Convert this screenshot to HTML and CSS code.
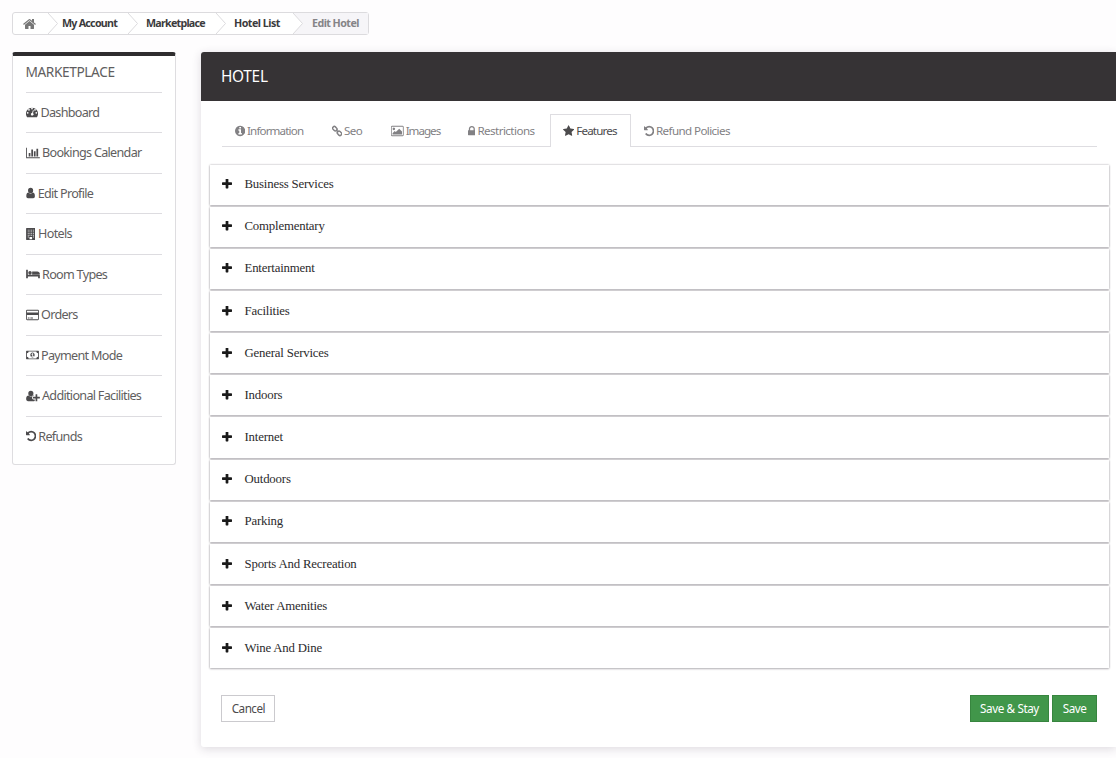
FILE: index.html
```html
<!DOCTYPE html>
<html lang="en">
<head>
    <meta charset="UTF-8">
    <title>Edit Hotel</title>
    <link rel="stylesheet" href="styles.css">
</head>
<body>
    <!-- icons -->
    <svg class="sprite" xmlns="http://www.w3.org/2000/svg">
        <symbol id="i-home" viewBox="64 0 1664 1792"><path d="M1472 992v480q0 26-19 45t-45 19h-384v-384h-256v384h-384q-26 0-45-19t-19-45v-480q0-1 .5-3t.5-3l575-474 575 474q1 2 1 6zm223-69l-62 74q-8 9-21 11h-3q-13 0-21-7l-692-577-692 577q-12 8-24 7-13-2-21-11l-62-74q-8-10-7-23.5t11-21.5l719-599q32-26 76-26t76 26l244 204v-195q0-14 9-23t23-9h192q14 0 23 9t9 23v408l219 182q10 8 11 21.5t-7 23.5z"/></symbol>
        <symbol id="i-dash" viewBox="0 0 1792 1792"><path fill-rule="evenodd" d="M896 256A896 896 0 0 0 140 1633q19 31 56 31h1400q37 0 56-31A896 896 0 0 0 896 256zM384 1024a128 128 0 1 1-256 0 128 128 0 0 1 256 0zm192-448a128 128 0 1 1-256 0 128 128 0 0 1 256 0zm448-192a128 128 0 1 1-256 0 128 128 0 0 1 256 0zm448 192a128 128 0 1 1-256 0 128 128 0 0 1 256 0zm192 448a128 128 0 1 1-256 0 128 128 0 0 1 256 0zM1140 691l-101 382a192 192 0 1 1-124-33l101-382q18-50 65-47 60 20 59 80z"/></symbol>
        <symbol id="i-chart" viewBox="0 0 2048 1792"><path d="M640 896v512h-256v-512h256zm384-512v1024h-256v-1024h256zm1024 1152v128h-2048v-1536h128v1408h1920zm-640-896v768h-256v-768h256zm384-384v1152h-256v-1152h256z"/></symbol>
        <symbol id="i-user" viewBox="0 0 1280 1792"><path d="M1280 1399q0 120-70 193t-186 72H256q-116 1-186-72T0 1399q0-180 40-340 55-220 258-242 150 145 342 145t342-145q203 22 258 242 40 160 40 340zM1024 512a384 384 0 1 1-768 0 384 384 0 0 1 768 0z"/></symbol>
        <symbol id="i-building" viewBox="0 0 1408 1792"><path fill-rule="evenodd" d="M64 0h1280q64 0 64 64v1664q0 64-64 64H64q-64 0-64-64V64Q0 0 64 0zM256 256v128h128V256zm256 0v128h128V256zm256 0v128h128V256zm256 0v128h128V256zM256 512v128h128V512zm256 0v128h128V512zm256 0v128h128V512zm256 0v128h128V512zM256 768v128h128V768zm256 0v128h128V768zm256 0v128h128V768zm256 0v128h128V768zM256 1024v128h128v-128zm256 0v128h128v-128zm256 0v128h128v-128zm256 0v128h128v-128zM256 1280v128h128v-128zm768 0v128h128v-128zM512 1344v320h384v-320z"/></symbol>
        <symbol id="i-bed" viewBox="0 0 2048 1792"><path d="M256 1024h1728q26 0 45 19t19 45v448h-256v-256h-1536v256h-256v-1216q0-26 19-45t45-19h128q26 0 45 19t19 45v704zm576-320q0-106-75-181t-181-75-181 75-75 181 75 181 181 75 181-75 75-181zm1216 256v-64q0-159-112.5-271.5t-271.5-112.5h-704q-26 0-45 19t-19 45v384h1152z"/></symbol>
        <symbol id="i-card" viewBox="0 0 1920 1792"><path fill-rule="evenodd" d="M160 128h1600q160 0 160 160v1216q0 160-160 160H160q-160 0-160-160V288q0-160 160-160zm0 128q-32 0-32 32v224h1664V288q0-32-32-32zM128 896v608q0 32 32 32h1600q32 0 32-32V896zM256 1280h256v128H256zm384 0h384v128H640z"/></symbol>
        <symbol id="i-money" viewBox="0 0 1920 1792"><path fill-rule="evenodd" d="M64 256h1792q64 0 64 64v1152q0 64-64 64H64q-64 0-64-64V320q0-64 64-64zm320 128q0 256-256 256v512q256 0 256 256h1152q0-256 256-256V640q-256 0-256-256zm576 128c180 0 320 170 320 384s-140 384-320 384-320-170-320-384 140-384 320-384zm-15 128L785 786l77 80 66-60v250H798v96h384v-96h-128V640z"/></symbol>
        <symbol id="i-userplus" viewBox="0 0 2048 1792"><path d="M1088 512a384 384 0 1 1-768 0 384 384 0 0 1 768 0zM1664 1024h352q32 0 32 32v192q0 32-32 32h-352v352q0 32-32 32h-192q-32 0-32-32v-352h-352q-32 0-32-32v-192q0-32 32-32h352V672q0-32 32-32h192q32 0 32 32zM896 1248q0 160 160 160h224v238q-50 18-112 18H267Q0 1650 0 1399q0-180 40-340 55-220 298-242 170 145 366 145t366-145l70 8v71h-84q-160 0-160 160z"/></symbol>
        <symbol id="i-undo" viewBox="128 0 1536 1792"><path d="M1664 896q0 156-61 298t-164 245-245 164-298 61q-172 0-327-72.5t-264-204.5q-7-10-6.5-22.5t8.5-20.5l137-138q10-9 25-9 16 2 23 12 73 95 179 147t225 52q104 0 198.5-40.5t163.5-109.5 109.5-163.5 40.5-198.5-40.5-198.5-109.5-163.5-163.5-109.5-198.5-40.5q-98 0-188 35.5t-160 101.5l137 138q31 30 14 69-17 40-59 40h-448q-26 0-45-19t-19-45v-448q0-42 40-59 39-17 69 14l130 129q107-101 244.5-156.5t284.5-55.5q156 0 298 61t245 164 164 245 61 298z"/></symbol>
        <symbol id="i-info" viewBox="128 0 1536 1792"><path d="M1152 1376v-160q0-14-9-23t-23-9h-96v-512q0-14-9-23t-23-9h-320q-14 0-23 9t-9 23v160q0 14 9 23t23 9h96v320h-96q-14 0-23 9t-9 23v160q0 14 9 23t23 9h448q14 0 23-9t9-23zm-128-896v-160q0-14-9-23t-23-9h-192q-14 0-23 9t-9 23v160q0 14 9 23t23 9h192q14 0 23-9t9-23zm640 416q0 209-103 385.5t-279.5 279.5-385.5 103-385.5-103-279.5-279.5-103-385.5 103-385.5 279.5-279.5 385.5-103 385.5 103 279.5 279.5 103 385.5z"/></symbol>
        <symbol id="i-link" viewBox="0 0 1664 1792"><g fill="none" stroke="currentColor" stroke-width="230" transform="rotate(45 832 896)"><rect x="-80" y="625" width="770" height="542" rx="240"/><rect x="974" y="625" width="770" height="542" rx="240"/><path d="M560 896h544"/></g></symbol>
        <symbol id="i-image" viewBox="0 0 1920 1792"><path transform="translate(32 0)" d="M576 576q0 80-56 136t-136 56-136-56-56-136 56-136 136-56 136 56 56 136zm1024 384v448h-1408v-192l320-320 160 160 512-512zm96-704h-1600q-13 0-22.5 9.5t-9.5 22.5v1216q0 13 9.5 22.5t22.5 9.5h1600q13 0 22.5-9.5t9.5-22.5v-1216q0-13-9.5-22.5t-22.5-9.5zm160 32v1216q0 66-47 113t-113 47h-1600q-66 0-113-47t-47-113v-1216q0-66 47-113t113-47h1600q66 0 113 47t47 113z"/></symbol>
        <symbol id="i-lock" viewBox="320 0 1152 1792"><path d="M640 768h512v-192q0-106-75-181t-181-75-181 75-75 181v192zm832 96v576q0 40-28 68t-68 28h-960q-40 0-68-28t-28-68v-576q0-40 28-68t68-28h32v-192q0-184 132-316t316-132 316 132 132 316v192h32q40 0 68 28t28 68z"/></symbol>
        <symbol id="i-star" viewBox="64 0 1664 1792"><path d="M1728 647q0 22-26 48l-363 354 86 500q1 7 1 20 0 21-10.5 35.5t-30.5 14.5q-19 0-40-12l-449-236-449 236q-22 12-40 12-21 0-31.5-14.5t-10.5-35.5q0-6 2-20l86-500-364-354q-25-27-25-48 0-37 56-46l502-73 225-455q19-41 49-41t49 41l225 455 502 73q56 9 56 46z"/></symbol>
        <symbol id="i-plus" viewBox="192 192 1408 1408"><path d="M1600 736v192q0 40-28 68t-68 28h-416v416q0 40-28 68t-68 28h-192q-40 0-68-28t-28-68v-416h-416q-40 0-68-28t-28-68v-192q0-40 28-68t68-28h416v-416q0-40 28-68t68-28h192q40 0 68 28t28 68v416h416q40 0 68 28t28 68z"/></symbol>
        <symbol id="i-arrow" viewBox="0 0 10 21"><path d="M0 0l9.500 10.500L0 21" fill="#fff" stroke="#dcdbde"/></symbol>
    </svg>

    <div class="breadcrumb">
        <a href="#" class="bc-home"><svg class="ico"><use href="#i-home"/></svg></a>
        <svg class="arrow"><use href="#i-arrow"/></svg>
        <a href="#" class="bc-account">My Account</a>
        <svg class="arrow"><use href="#i-arrow"/></svg>
        <a href="#" class="bc-market">Marketplace</a>
        <svg class="arrow"><use href="#i-arrow"/></svg>
        <a href="#" class="bc-list">Hotel List</a>
        <span class="bc-current"><svg class="arrow"><use href="#i-arrow"/></svg>Edit Hotel</span>
    </div>

    <div class="container">
        <div class="sidebar">
            <h2>MARKETPLACE</h2>
            <ul>
                <li><a href="#"><svg class="ico w1792"><use href="#i-dash"/></svg>Dashboard</a></li>
                <li><a href="#"><svg class="ico w2048"><use href="#i-chart"/></svg>Bookings Calendar</a></li>
                <li><a href="#"><svg class="ico w1280"><use href="#i-user"/></svg>Edit Profile</a></li>
                <li><a href="#"><svg class="ico w1408"><use href="#i-building"/></svg>Hotels</a></li>
                <li><a href="#"><svg class="ico w2048"><use href="#i-bed"/></svg>Room Types</a></li>
                <li><a href="#"><svg class="ico w1920"><use href="#i-card"/></svg>Orders</a></li>
                <li><a href="#"><svg class="ico w1920"><use href="#i-money"/></svg>Payment Mode</a></li>
                <li><a href="#"><svg class="ico w2048"><use href="#i-userplus"/></svg>Additional Facilities</a></li>
                <li><a href="#"><svg class="ico w1536"><use href="#i-undo"/></svg>Refunds</a></li>
            </ul>
        </div>

        <div class="panel">
            <h1>HOTEL</h1>
            <ul class="tabs">
                <li class="tab-info"><a href="#"><svg class="ico w1536"><use href="#i-info"/></svg>Information</a></li>
                <li class="tab-seo"><a href="#"><svg class="ico w1536"><use href="#i-link"/></svg>Seo</a></li>
                <li class="tab-images"><a href="#"><svg class="ico w1920"><use href="#i-image"/></svg>Images</a></li>
                <li class="tab-restrict"><a href="#"><svg class="ico w1152"><use href="#i-lock"/></svg>Restrictions</a></li>
                <li class="tab-features on"><a href="#"><svg class="ico w1664"><use href="#i-star"/></svg>Features</a></li>
                <li class="tab-refund"><a href="#"><svg class="ico w1536"><use href="#i-undo"/></svg>Refund Policies</a></li>
            </ul>

            <div class="accordion">
                <div class="acc-item"><svg class="plus"><use href="#i-plus"/></svg>Business Services</div>
                <div class="acc-item"><svg class="plus"><use href="#i-plus"/></svg>Complementary</div>
                <div class="acc-item"><svg class="plus"><use href="#i-plus"/></svg>Entertainment</div>
                <div class="acc-item"><svg class="plus"><use href="#i-plus"/></svg>Facilities</div>
                <div class="acc-item"><svg class="plus"><use href="#i-plus"/></svg>General Services</div>
                <div class="acc-item"><svg class="plus"><use href="#i-plus"/></svg>Indoors</div>
                <div class="acc-item"><svg class="plus"><use href="#i-plus"/></svg>Internet</div>
                <div class="acc-item"><svg class="plus"><use href="#i-plus"/></svg>Outdoors</div>
                <div class="acc-item"><svg class="plus"><use href="#i-plus"/></svg>Parking</div>
                <div class="acc-item"><svg class="plus"><use href="#i-plus"/></svg>Sports And Recreation</div>
                <div class="acc-item"><svg class="plus"><use href="#i-plus"/></svg>Water Amenities</div>
                <div class="acc-item"><svg class="plus"><use href="#i-plus"/></svg>Wine And Dine</div>
            </div>

            <div class="btns">
                <button type="button" class="btn btn-cancel">Cancel</button>
                <button type="button" class="btn btn-save btn-stay">Save &amp; Stay</button>
                <button type="button" class="btn btn-save">Save</button>
            </div>
        </div>
    </div>
</body>
</html>
```
FILE: styles.css
```css
*{ box-sizing: border-box; }

body, ul, li, h1, h2{
    margin: 0; padding: 0;
    list-style: none;
    font-weight: normal;
}
body{
    height: 758px;
    overflow: hidden;
    padding: 12px 0 0 12px;
    background-color: #fefdfe;
    font-family: "Noto Sans", "Open Sans", sans-serif;
    color: #5f5e60;
}
a{ color: inherit; text-decoration: none; }
.sprite{ display: none; }
.ico{
    flex: none;
    width: 12px;
    height: 12px;
    margin-right: 2.5px;
    fill: currentColor;
}
.w1152{ width: 7.7px; }
.w1280{ width: 9.2px; }
.w1408{ width: 9.6px; }
.w1536{ width: 10.3px; }
.w1664{ width: 11.2px; }
.w1920{ width: 13px; }
.w2048{ width: 14px; }

/* breadcrumb */
.breadcrumb{
    display: flex;
    width: 357px;
    height: 23px;
    border: 1px solid #dcdbde;
    border-radius: 3px;
    background-color: #fff;
    font-size: 10.7px;
    font-weight: bold;
    line-height: 21px;
    letter-spacing: -0.75px;
    color: #3c3b3d;
    white-space: nowrap;
}
.breadcrumb a{ padding-left: 4px; }
.arrow{ flex: none; width: 10px; height: 21px; }
.breadcrumb .bc-home{ display: flex; align-items: center; width: 35px; padding-left: 10px; color: #777; }
.bc-home .ico{ width: 13px; height: 14px; }
.bc-account{ width: 70px; }
.bc-market{ width: 78px; }
.breadcrumb .bc-market, .breadcrumb .bc-list{ padding-left: 8px; }
.breadcrumb .bc-list{ width: 67px; letter-spacing: -0.5px; }
.bc-current{
    display: flex;
    flex: 1;
    background-color: #f6f5f8;
    letter-spacing: -0.55px;
    color: #858487;
}
.bc-current .arrow{ margin-right: 9px; }

.container{
    display: flex;
    align-items: flex-start;
    margin-top: 17px;
}

/* sidebar */
.sidebar{
    width: 164px;
    height: 413px;
    margin-right: 25px;
    padding: 0 13px 0 12.5px;
    border: 1px solid #dedde0;
    border-top: 4px solid #2f2d2f;
    border-radius: 3px;
    background-color: #fff;
}
.sidebar h2{
    height: 36.5px;
    border-bottom: 1px solid #dddce0;
    font-size: 13.7px;
    line-height: 31px;
    letter-spacing: -0.4px;
}
.sidebar li{
    height: 40.5px;
    border-bottom: 1px solid #dddce0;
}
.sidebar li:last-child{ border-bottom: 0; }
.sidebar li a{
    display: flex;
    align-items: center;
    height: 39.5px;
    font-size: 12.6px;
    letter-spacing: -0.7px;
    white-space: nowrap;
}
.sidebar .ico{ color: #4c4b4d; }
.sidebar .w1792, .sidebar .w1280, .sidebar .w1408{ margin-right: 3px; }

/* panel */
.panel{
    flex: 1;
    height: 695px;
    border-radius: 3px 0 0 3px;
    background-color: #fff;
    box-shadow: 0 2px 10px rgba(50, 40, 60, 0.16);
}
.panel h1{
    height: 49px;
    padding-left: 20px;
    border-radius: 3px 0 0 0;
    background-color: #363335;
    color: #fff;
    font-size: 15.4px;
    line-height: 50px;
    letter-spacing: -0.3px;
}

.tabs{
    display: flex;
    height: 33px;
    margin: 13px 19px 0 21px;
    border-bottom: 1px solid #dedde1;
    font-size: 11.6px;
    letter-spacing: -0.6px;
    color: #828184;
    white-space: nowrap;
}
.tabs li{ height: 33px; padding-left: 12.7px; }
.tabs li a{ display: flex; align-items: center; height: 33px; }
.tabs .ico{ margin-right: 2px; }
.tab-info{ width: 97px; letter-spacing: -0.85px; }
.tab-seo{ width: 59px; }
.tab-images{ width: 77px; letter-spacing: -1px; }
.tab-restrict{ width: 95px; letter-spacing: -0.55px; }
.tab-features{ width: 81px; letter-spacing: -0.8px; }
.tabs .on{
    padding-left: 12px;
    border: 1px solid #dedde1;
    border-bottom: 0;
    background-color: #fff;
    color: #4c4b4d;
}
.tabs .on a{ height: 31px; }

/* accordion */
.accordion{ margin: 17.5px 7.5px 0 9px; }
.acc-item{
    display: flex;
    align-items: center;
    height: 40.2px;
    margin-bottom: 1.97px;
    padding-left: 12px;
    background-color: #fff;
    box-shadow: 0 0 2px rgba(40, 35, 45, 0.35), 0 1px 2px rgba(40, 35, 45, 0.25);
    font-family: "Liberation Serif", serif;
    font-size: 12.8px;
    letter-spacing: -0.18px;
    color: #2c2b2d;
}
.plus{
    width: 10px;
    height: 10px;
    margin: 0 12.5px 1px 0;
    fill: #1a1a1a;
}

/* buttons */
.btns{
    display: flex;
    margin: 26.5px 19px 0 20.4px;
}
.btn{
    height: 27px;
    padding: 0;
    border: 1px solid #cbcace;
    background-color: #fff;
    font-family: inherit;
    font-size: 11.7px;
    letter-spacing: -0.5px;
    color: #4c4b4d;
}
.btn-cancel{ width: 54px; margin-right: auto; }
.btn-save{
    width: 45px;
    border-color: #37853f;
    background-color: #41964a;
    color: #fff;
}
.btn-stay{ width: 79px; margin-right: 3px; letter-spacing: -0.4px; }
```
